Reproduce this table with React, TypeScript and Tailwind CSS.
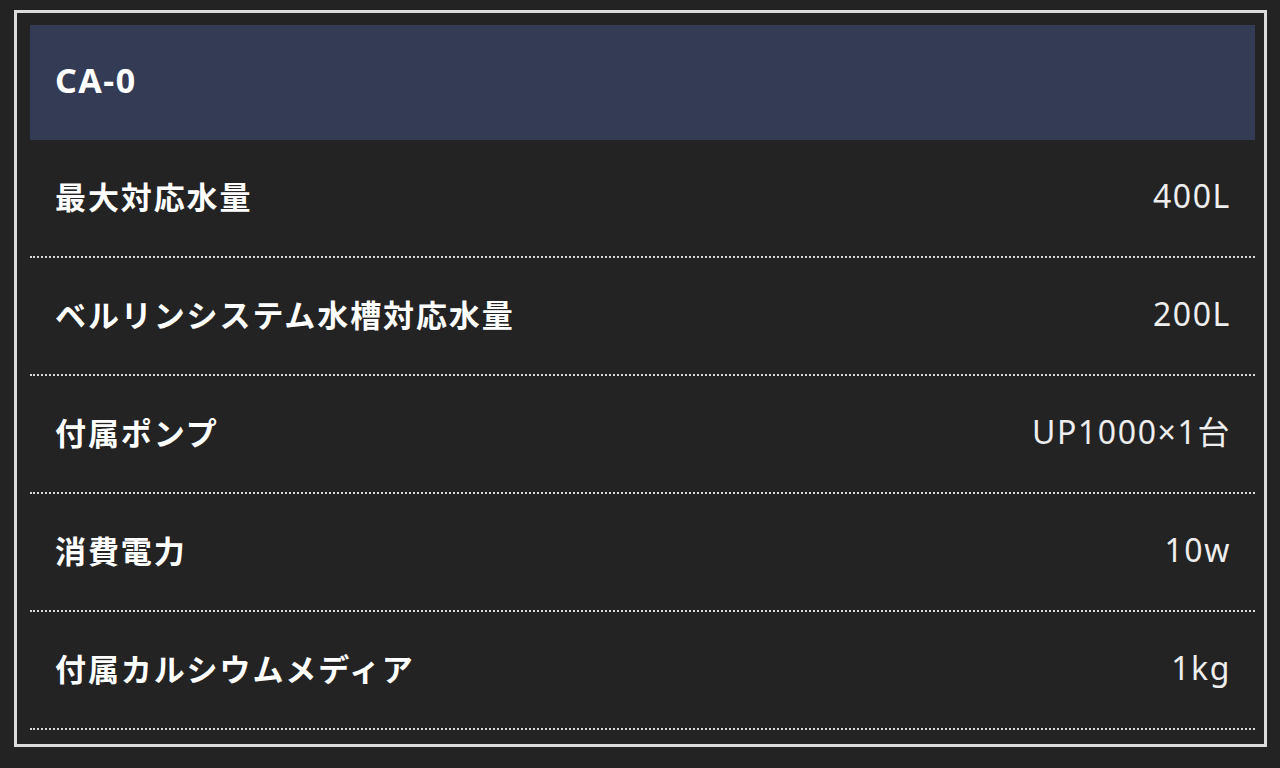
const specs = [
  { label: '最大対応水量', value: '400L' },
  { label: 'ベルリンシステム水槽対応水量', value: '200L' },
  { label: '付属ポンプ', value: 'UP1000×1台' },
  { label: '消費電力', value: '10w' },
  { label: '付属カルシウムメディア', value: '1kg' },
]

export default function App() {
  return (
    <div
      className="min-h-screen w-full bg-[#232323] pl-[14px] pt-[10px]"
      style={{ fontFamily: '"Noto Sans", "Noto Sans CJK JP", sans-serif' }}
    >
      <div className="w-[1253px] border-[3px] border-[#dcdcdc] bg-[#232323] pl-[13px] pr-[9px] pt-[12px] pb-[14px]">
        <div className="flex h-[115px] items-center bg-[#343b55] px-[25px]">
          <span className="-mt-[5px] text-[34px] font-bold tracking-[1.5px] text-white">CA-0</span>
        </div>
        {specs.map(s => (
          <div
            key={s.label}
            className="flex h-[118px] items-center justify-between border-b-2 border-dotted border-[#d8d8d8] pl-[25px] pr-[24px]"
          >
            <span
              className="-mt-[4px] text-[31px] font-bold tracking-[1.9px] text-white"
              style={{ fontFamily: '"Noto Sans CJK JP", sans-serif' }}
            >
              {s.label}
            </span>
            <span className="-mt-[4px] text-[32px] tracking-[1.6px] text-[#eeeeee]">{s.value}</span>
          </div>
        ))}
      </div>
    </div>
  )
}
